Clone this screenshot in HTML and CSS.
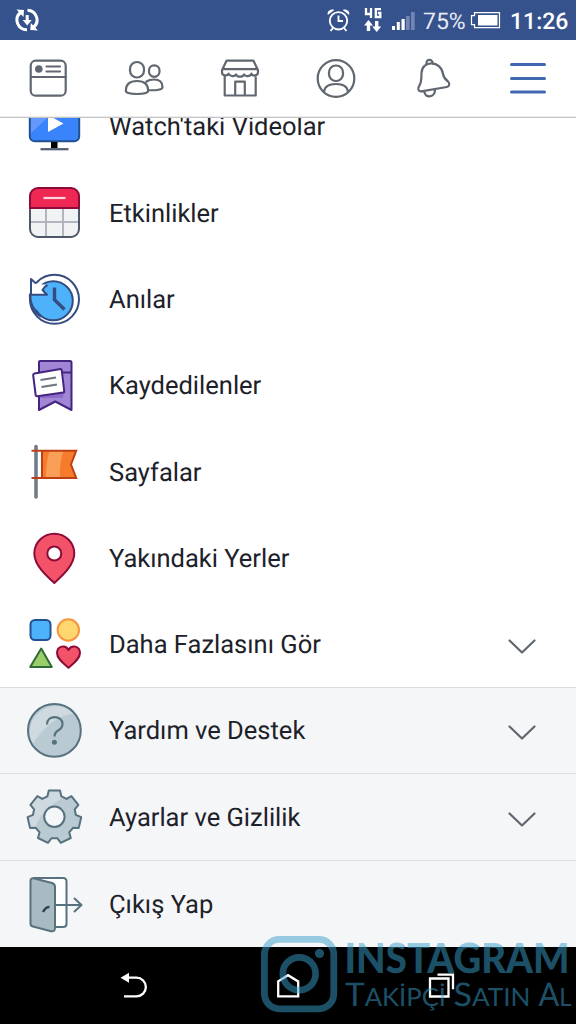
FILE: index.html
```html
<!DOCTYPE html>
<html lang="tr">
<head>
<meta charset="utf-8">
<title>Menü</title>
<link rel="stylesheet" href="styles.css">
</head>
<body>
<div class="screen">
  <header class="status">
    <svg class="sync" viewBox="15 7 26 26" width="26" height="26">
      <g fill="none" stroke="#fff" stroke-width="3"><path d="M27 29.800A9.800 9.800 0 0 1 20.500 12.500M27.500 10.200A9.800 9.800 0 0 1 33.500 27.500"/></g>
      <path fill="#fff" d="M16.500 9.500l7.500.500-.500 7zM38 30.500l-7.700-.500.500-7zM25.700 15h3v5h3l-4.500 5.500-4.500-5.500h3z"/>
    </svg>
    <div class="indicators">
      <svg viewBox="326 6 96 28" width="96" height="28">
        <g fill="none" stroke="#fff" stroke-width="1.900"><circle cx="338.500" cy="20.800" r="8.700"/><path d="M338.500 15.500v5.500h4.500M333 28l-2.500 3M344 28l2.500 3"/></g>
        <path fill="#fff" d="M327.800 15c-1-4 3-6.500 6.500-5zM349.200 15c1-4-3-6.500-6.500-5z"/>
        <path fill="none" stroke="#fff" stroke-width="2.300" d="M366 8v6h5.500M371 8v10M381 9.200h-5.200v7.800h4.500v-4h-2.500"/>
        <path fill="#fff" d="M368.500 20l4.500 5.500h-2.800v5.500h-3.400v-5.500h-2.800zM376.700 32l-4.500-5.500h2.800v-5.500h3.400v5.500h2.800zM392 26h3v4h-3zM396.800 22h3v8h-3zM401.500 19h3.200v11h-3.200z"/>
        <path fill="#7285b5" d="M406 16h3.700v14H406zM411 12h3.700v18H411z"/>
      </svg>
      <span class="percent">75%</span>
      <svg class="battery" viewBox="470 10 32 20" width="32" height="20"><path fill="none" stroke="#fff" stroke-width="1.200" d="M474.500 12.700h25v15h-25v-3h-3v-9h3z"/><path fill="#fff" d="M478 15h19.500v10.500H478z"/></svg>
      <span class="clock">11:26</span>
    </div>
  </header>

  <nav class="tabs">
    <svg viewBox="0 40 96 76" width="96" height="76"><g class="line"><rect x="30.700" y="60.700" width="35" height="35" rx="5"/><path d="M31 77h35M46.500 66.500h13.500M46.500 71.500h13.500"/></g><circle cx="38.800" cy="69" r="3.800" fill="#606770"/></svg>
    <svg viewBox="96 40 96 76" width="96" height="76"><g class="line"><rect x="130" y="62" width="14" height="15.500" rx="7"/><rect x="149" y="65.300" width="10.500" height="11.500" rx="5.200"/><path d="M125.800 91c0-7 4-10 11.200-10s11.200 3 11.200 10c0 4-22.400 4-22.400 0zM146.500 81.500c2-1.500 4-2 7.500-2 5.500 0 8.500 3 8.500 7.500 0 3.500-9 3.500-14.500 3"/></g></svg>
    <svg viewBox="192 40 96 76" width="96" height="76"><g class="line"><path d="M226.500 60.700h27l4.500 9.500v2c0 4-6 4-6.500 1.500-1.500 3.200-6.500 3.200-7.500.7-1.500 3-6.500 3-8 0-1.200 2.300-6 2.300-7.500-.7-.8 2.500-6.500 2.500-6.500-1.500v-2zM222.500 69.200h35M224.700 75.500v20h31v-20M235.200 95.500V81.700h9.600v13.800"/></g></svg>
    <svg viewBox="288 40 96 76" width="96" height="76"><g class="line"><circle cx="336" cy="78.500" r="18.300"/><rect x="329" y="65.500" width="14" height="15.500" rx="6.800"/><path d="M324 92c.5-5.500 5-8 12-8s11.500 2.500 12 8"/></g></svg>
    <svg viewBox="384 40 96 76" width="96" height="76"><g class="line"><path d="M421.500 73c.5-13 19.500-13 21.500 1 .6 4 2.500 5.500 5 7.500 2 1.800 1.500 5-1.200 5.500l-25.500 4.300c-3 .5-4-3-2-5.500 2-2.500 2.200-5 2.200-12.800zM426.500 64c-1-5.500 6.500-5.500 6.500 0M424.500 91.500c0 7 10.500 6.500 10.500-1.500"/></g></svg>
    <svg viewBox="480 40 96 76" width="96" height="76"><path d="M511.500 64.500h33M511.500 78.500h33M511.500 92h33" fill="none" stroke="#4267b2" stroke-width="3" stroke-linecap="round"/></svg>
  </nav>

  <main class="viewport">
    <ul class="menu">
      <li class="row">
        <svg viewBox="22 82 64 87" width="64" height="87"><rect x="29.800" y="104" width="49.400" height="37.300" rx="5" fill="#3984fb"/><path d="M30 134v-26h28z" fill="#6598fc"/><rect x="29.800" y="104" width="49.400" height="37.300" rx="5" fill="none" stroke="#205291" stroke-width="2"/><path d="M48 115l15.500 8.500L48 132z" fill="#fff"/><path d="M51 142h6.500v6H51z"/><path d="M40.500 149.200h28" stroke="#515b70" stroke-width="2.200"/></svg>
        <span class="label">Watch'taki Videolar</span>
      </li>
      <li class="row lowered">
        <svg viewBox="22 169 64 86" width="64" height="86"><rect x="30" y="188" width="49" height="49.300" rx="8" fill="#f1f2f3"/><path d="M46 208v29M63 208v29M30 222h49" stroke="#b1b5bf" stroke-width="2"/><path d="M30 207v22a8 8 0 0 0 8 8h33a8 8 0 0 0 8-8v-22" fill="none" stroke="#4f586b" stroke-width="2"/><path d="M30 208v-12a8 8 0 0 1 8-8h33a8 8 0 0 1 8 8v12z" fill="#ef2853" stroke="#8c0b38" stroke-width="2"/><path d="M43.500 198h22" stroke="#fbd5dc" stroke-width="2.200"/></svg>
        <span class="label">Etkinlikler</span>
      </li>
      <li class="row lowered">
        <svg viewBox="22 255 64 86" width="64" height="86">
          <circle cx="54.500" cy="299.300" r="24.500" fill="#fff" stroke="#344c80" stroke-width="2"/>
          <circle cx="53.300" cy="300.800" r="19.500" fill="#4eb2fb" stroke="#344c80" stroke-width="2"/>
          <path d="M31.500 295h7l1 14-4.500 1c-2.500-4-3.500-9-3.500-15z" fill="#4eb2fb"/>
          <path d="M30.200 294c-.5 10 4 18 11 22.500" fill="none" stroke="#344c80" stroke-width="2.600"/>
          <path d="M36 283.500l-5-4.500v15.800h16l-4.500-4.800q2-3.500 5-5z" fill="#fff"/>
          <path d="M36 283.500l-5-4.500v15.800h16l-4.500-4.800q2-3.500 5-5" fill="none" stroke="#344c80" stroke-width="2" stroke-linejoin="round"/>
          <path d="M54.500 287.500v12.200l10 9.800" fill="none" stroke="#344c80" stroke-width="3.400"/>
        </svg>
        <span class="label">Anılar</span>
      </li>
      <li class="row lowered">
        <svg viewBox="22 341 64 87" width="64" height="87"><g stroke="#44257f" stroke-width="2" stroke-linejoin="round"><path d="M39 362q0-1 1-1h30q1.500 0 1.500 1.500V410l-16.200-8.500L39 410z" fill="#a286d6"/><path d="M62 372.500h9.500" fill="none"/></g><path d="M40 398h21q3 0 2.500-4l-1-14z" fill="#8e6ac9"/><path d="M34.500 373.500l26-4.500q1 0 1.200 1l2.500 21q.2 1.500-1 1.600l-26 3.700q-1.200.2-1.500-1l-2.500-20q-.1-1.500 1.300-1.800z" fill="#fff" stroke="#44257f" stroke-width="2"/><path d="M40.500 380l15.500-2.500M41.500 387l15.500-2.500" stroke="#6c7482" stroke-width="2"/></svg>
        <span class="label">Kaydedilenler</span>
      </li>
      <li class="row lowered">
        <svg viewBox="22 428 64 86" width="64" height="86"><path d="M36 446.500v50.500" stroke="#727b88" stroke-width="3.600" stroke-linecap="round"/><path d="M42 451h34l-5 13.500 5 13.500H42z" fill="#f57c2d"/><path d="M49.500 451h14c-3 8-4 17-3.500 27H46c0-10 1-20 3.500-27z" fill="#fa9f58"/><path d="M31.500 450.800h44.700l-5.200 13.700 5.200 13.500H31.500M42 451v27" fill="none" stroke="#bf3f12" stroke-width="2"/></svg>
        <span class="label">Sayfalar</span>
      </li>
      <li class="row lowered">
        <svg viewBox="22 514 64 86" width="64" height="86"><path d="M54.300 583C46 575.500 34.300 565 34.300 553.500a20 19.700 0 0 1 40 0C74.300 565 62.500 575.500 54.300 583z" fill="#f35369" stroke="#8c0b38" stroke-width="2" stroke-linejoin="round"/><circle cx="54.300" cy="553.500" r="7" fill="#fff" stroke="#8c0b38" stroke-width="2"/></svg>
        <span class="label">Yakındaki Yerler</span>
      </li>
      <li class="row">
        <svg viewBox="22 600 64 87" width="64" height="87"><rect x="30.500" y="620" width="20" height="20" rx="4.500" fill="#4eb2fb" stroke="#205291" stroke-width="2"/><circle cx="68.300" cy="630" r="10.700" fill="#ffd771" stroke="#fb9439" stroke-width="2"/><path d="M41.200 648.500L51.800 667H30.200z" fill="#9bce68" stroke="#2f6b37" stroke-width="2" stroke-linejoin="round"/><path d="M68.500 667.800C63 663 57 658.500 57 653c0-7 8.500-9 11.500-3 3-6 11.500-4 11.500 3 0 5.500-6 10-11.500 14.800z" fill="#f35369" stroke="#8c0b38" stroke-width="2" stroke-linejoin="round"/></svg>
        <span class="label">Daha Fazlasını Gör</span>
        <svg class="chevron" viewBox="0 0 30 20" width="30" height="20"><path d="M2.500 3.500L15 15.500 27.500 3.500"/></svg>
      </li>
      <li class="row shaded">
        <svg viewBox="22 687 64 86" width="64" height="86"><circle cx="54.400" cy="730.400" r="26.400" fill="#b9cad2"/><path d="M32.500 744.500A26.400 26.400 0 0 1 74 713.200C56 716 43 728 32.500 744.500z" fill="#cfdae0"/><circle cx="54.400" cy="730.400" r="26.400" fill="none" stroke="#57727f" stroke-width="2"/><path d="M47 724.500c0-10 15.500-9.500 15.500-.5 0 8-8 4.500-8 12.500" fill="none" stroke="#57727f" stroke-width="2.200"/><circle cx="54.400" cy="742.200" r="2.500" fill="#57727f"/></svg>
        <span class="label">Yardım ve Destek</span>
        <svg class="chevron" viewBox="0 0 30 20" width="30" height="20"><path d="M2.500 3.500L15 15.500 27.500 3.500"/></svg>
      </li>
      <li class="row shaded">
        <svg viewBox="-32.400 -43.800 64 87" width="64" height="87">
          <defs>
            <path id="gear" d="M-5.600-26.200H5.600L7-20.400 12.200-17.900 17-20.700 24-12 20.300-7.500 21.400-2 26.800.4 24.300 11.300 18.600 11 14.800 15.500 16.400 21.200 6.400 26 2.800 21.400H-2.800L-6.400 26-16.400 21.200-14.800 15.500-18.600 11-24.300 11.300-26.800.4-21.400-2-20.300-7.500-24-12-17-20.700-12.200-17.900-7-20.400z"/>
            <clipPath id="gear-shape"><use href="#gear"/></clipPath>
          </defs>
          <use href="#gear" fill="#b9cad2"/>
          <path d="M-30-30H25C12-18-12-14-20 14L-30 18z" fill="#cfdae0" clip-path="url(#gear-shape)"/>
          <use href="#gear" fill="none" stroke="#57727f" stroke-width="2" stroke-linejoin="round"/>
          <circle r="10.200" fill="#f5f6f8" stroke="#57727f" stroke-width="2"/>
        </svg>
        <span class="label">Ayarlar ve Gizlilik</span>
        <svg class="chevron" viewBox="0 0 30 20" width="30" height="20"><path d="M2.500 3.500L15 15.500 27.500 3.500"/></svg>
      </li>
      <li class="row shaded">
        <svg viewBox="22 860 64 87" width="64" height="87"><g stroke="#57727f" stroke-width="2" stroke-linejoin="round"><path d="M33 878h30q3.500 0 3.500 3.500v42.500q0 3-3.500 3H51" fill="#fff"/><path d="M30.500 881q0-3.500 4-2.500l17.500 4.500q3 1 3 4v41q0 4-4 3.200L33 926.500q-2.500-.5-2.500-3z" fill="#a8bbc2"/><path d="M55.500 905h26M74 898l7.500 7-7.500 7" fill="none"/></g><path d="M43 912c1.500-3 3-5 6.500-5" fill="none" stroke="#34424b" stroke-width="2.500"/></svg>
        <span class="label">Çıkış Yap</span>
      </li>
    </ul>
  </main>

  <footer class="navbar">
    <svg viewBox="110 965 50 42" width="50" height="42"><path d="M127 977.700h9.500a9.300 9.300 0 0 1 0 18.700H124" fill="none" stroke="#fff" stroke-width="2.300"/><path d="M120.500 977.700l8.500-5v10z" fill="#fff"/></svg>
    <svg viewBox="263 965 50 42" width="50" height="42"><path d="M278.200 996.400v-15l9.800-6.200 10.200 6.200v15z" fill="none" stroke="#fff" stroke-width="2.300"/></svg>
    <svg viewBox="416 965 50 42" width="50" height="42"><path d="M430 978.500h18.500v18H430zM437.500 974.700h15.500v14.500" fill="none" stroke="#fff" stroke-width="2.300"/></svg>
  </footer>

  <svg class="watermark" viewBox="256 930 320 94" width="320" height="94">
    <rect x="264.400" y="939.400" width="69.400" height="69.400" rx="15" fill="none" stroke="#38a0cc" stroke-width="6.800"/>
    <circle cx="299.200" cy="973.800" r="16.400" fill="none" stroke="#38a0cc" stroke-width="6.600"/>
    <circle cx="319.500" cy="953.500" r="4.600" fill="#38a0cc"/>
    <text class="brand" x="344.500" y="973" textLength="225" lengthAdjust="spacingAndGlyphs">INSTAGRAM</text>
    <text class="tagline" x="345" y="1005.500" textLength="101" lengthAdjust="spacingAndGlyphs">T<tspan class="small">AKİPÇİ</tspan></text>
    <text class="tagline" x="453.500" y="1005.500" textLength="77" lengthAdjust="spacingAndGlyphs">S<tspan class="small">ATIN</tspan></text>
    <text class="tagline" x="538.500" y="1005.500" textLength="33" lengthAdjust="spacingAndGlyphs">A<tspan class="small">L</tspan></text>
  </svg>
</div>
</body>
</html>
```
FILE: styles.css
```css
* { box-sizing: border-box; }
body { margin: 0; background: #fff; font-family: Roboto, "Noto Sans", sans-serif; text-rendering: geometricPrecision; }
svg { display: block; flex: none; }
.screen {
  position: relative;
  display: flex;
  flex-direction: column;
  width: 576px;
  height: 1024px;
  overflow: hidden;
}
.status {
  display: flex;
  justify-content: space-between;
  align-items: center;
  height: 40px;
  padding: 0 8px 0 15px;
  background: #36528c;
  color: #fff;
}
.indicators { display: flex; align-items: center; }
.percent { width: 48px; padding: 3px 0 0 1px; font-size: 23px; line-height: 38px; color: #e6eaf3; }
.clock { width: 58px; margin-left: 8px; padding-top: 3px; font-size: 23px; font-weight: 500; line-height: 38px; white-space: nowrap; }
.tabs {
  display: flex;
  height: 78px;
  border-bottom: 1px solid #c4c5c7;
  box-shadow: inset 0 -1px #ececed;
  background: #fff;
}
.line { fill: none; stroke: #606770; stroke-width: 2.2; stroke-linejoin: round; stroke-linecap: round; }
.viewport { height: 829px; overflow: hidden; }
.menu {
  display: grid;
  grid-template-rows: 87px 86px 86px 87px 86px 86px 87px 86px 87px 87px;
  margin: -36px 0 0;
  padding: 0;
  list-style: none;
}
.row { display: flex; align-items: center; padding: 0 39px 0 22px; background: #fff; }
.shaded { background: #f5f6f8; box-shadow: inset 0 1px #dadde1; }
.label { flex: 1; padding: 2px 0 0 23px; font-size: 25.5px; line-height: 32px; color: #1d2129; white-space: nowrap; }
.lowered .label { padding-top: 3px; }
.chevron { margin-top: 6px; }
.chevron path { fill: none; stroke: #606770; stroke-width: 2.2; stroke-linecap: round; stroke-linejoin: round; }
.navbar {
  display: flex;
  justify-content: space-between;
  height: 77px;
  padding: 18px 110px 0;
  background: #000;
}
.watermark { position: absolute; right: 0; bottom: 0; opacity: .5; }
.brand { fill: #38a0cc; font: 900 41.5px Lato, "Open Sans", sans-serif; }
.tagline { fill: #38a0cc; font: 400 32.5px Lato, "Open Sans", sans-serif; }
.small { font-size: 25px; }
```
